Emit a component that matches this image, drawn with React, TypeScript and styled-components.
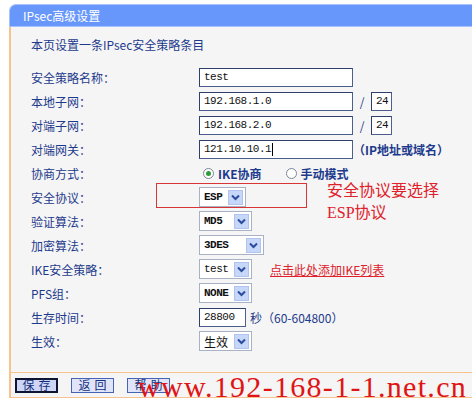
import React from 'react';
import styled, { createGlobalStyle } from 'styled-components';

const GlobalStyle = createGlobalStyle`
  body {
    margin: 0;
    background: #ffffff;
    font-family: "Noto Sans CJK SC", "Liberation Sans", sans-serif;
    font-size: 12px;
  }
`;

const Page = styled.div`
  padding: 4px 0 0 9px;
  width: 463px;
`;

const TitleBar = styled.div`
  height: 23px;
  box-sizing: border-box;
  display: flex;
  align-items: center;
  padding-left: 13px;
  background: #6797fa;
  border: 1px solid #a8c3fb;
  border-right: none;
  border-top-left-radius: 7px;
  color: #ffffff;
  font-size: 12px;
`;

const Body = styled.div`
  position: relative;
  background: #f5f5f5;
  border-left: 2px solid #f7c28e;
  padding: 6px 0 19px 20px;
  color: #1d3a8c;
`;

const Intro = styled.div`
  line-height: 24px;
  margin-bottom: 8px;
`;

const Form = styled.div`
  display: grid;
  grid-template-columns: 168px 1fr;
  grid-auto-rows: 24px;
  align-items: center;
`;

const Label = styled.div`
  color: #1d3a8c;
`;

const Field = styled.div<{ $gap?: number }>`
  display: flex;
  align-items: center;
  gap: ${(p) => p.$gap ?? 0}px;
`;

const TextInput = styled.div<{ $w: number }>`
  width: ${(p) => p.$w}px;
  height: 19px;
  box-sizing: border-box;
  display: flex;
  align-items: center;
  padding-left: 4px;
  background: #ffffff;
  border: 1px solid #4d5f8f;
  border-top-color: #2f3f6c;
  border-left-color: #2f3f6c;
  font-family: "Liberation Mono", monospace;
  font-size: 11px;
  letter-spacing: -0.5px;
  color: #111;
`;

const Caret = styled.span`
  display: inline-block;
  width: 1px;
  height: 13px;
  margin-left: 1px;
  background: #000;
`;

const Slash = styled.span`
  width: 18px;
  text-align: center;
  color: #1d3a8c;
  font-size: 12px;
`;

const Hint = styled.span<{ $bold?: boolean }>`
  color: #1d3a8c;
  font-weight: ${(p) => (p.$bold ? 700 : 400)};
`;

const SelectBox = styled.div<{ $w: number }>`
  width: ${(p) => p.$w}px;
  height: 20px;
  box-sizing: border-box;
  display: flex;
  align-items: center;
  justify-content: space-between;
  padding: 0 2px 0 4px;
  background: #ffffff;
  border: 1px solid #a9b2c4;
`;

const SelectText = styled.span<{ $kind: 'bold' | 'mono' | 'cjk' }>`
  font-family: ${(p) =>
    p.$kind === 'cjk' ? '"Noto Sans CJK SC", sans-serif' : '"Liberation Mono", monospace'};
  font-weight: ${(p) => (p.$kind === 'bold' ? 700 : 400)};
  font-size: ${(p) => (p.$kind === 'cjk' ? 12 : 11)}px;
  letter-spacing: ${(p) => (p.$kind === 'cjk' ? 0 : -0.5)}px;
  color: #111;
`;

const ArrowButton = styled.span`
  width: 15px;
  height: 15px;
  box-sizing: border-box;
  display: flex;
  align-items: center;
  justify-content: center;
  background: #c7d7f9;
  border: 1px solid #b1c3ec;
`;

const Radio = styled.span<{ $on?: boolean }>`
  width: 11px;
  height: 11px;
  box-sizing: border-box;
  border-radius: 50%;
  border: 1px solid #7a8699;
  background: #ffffff;
  display: flex;
  align-items: center;
  justify-content: center;
  margin: 0 4px 0 4px;
  &::after {
    content: '';
    display: ${(p) => (p.$on ? 'block' : 'none')};
    width: 5px;
    height: 5px;
    border-radius: 50%;
    background: #2f9a3a;
  }
`;

const RadioLabel = styled.span`
  color: #1d3a8c;
  font-weight: 700;
  margin-right: 20px;
`;

const Link = styled.span`
  color: #e0202a;
  text-decoration: underline;
  margin-left: 18px;
`;

const MarkBox = styled.div`
  position: absolute;
  left: 145px;
  top: 156px;
  width: 151px;
  height: 25px;
  box-sizing: border-box;
  border: 1.5px solid #d83636;
`;

const MarkText = styled.div`
  position: absolute;
  left: 316px;
  top: 153px;
  font-size: 16px;
  line-height: 22px;
  color: #e0202a;
  font-family: "Liberation Serif", "Noto Sans CJK SC", serif;
`;

const Footer = styled.div`
  position: relative;
  height: 26px;
  box-sizing: border-box;
  display: flex;
  align-items: center;
  gap: 13px;
  padding-left: 4px;
  background: #f5f5f5;
  border-top: 1px solid #f7c28e;
  border-bottom: 1px solid #f7c28e;
  border-left: 2px solid #f7c28e;
`;

const Button = styled.button<{ $focused?: boolean }>`
  width: 43px;
  height: 15px;
  box-sizing: border-box;
  padding: 0;
  display: flex;
  align-items: center;
  justify-content: center;
  background: ${(p) => (p.$focused ? '#cfd6f5' : '#dfe4f8')};
  border: ${(p) => (p.$focused ? '2px solid #0e1530' : '1px solid #4663b4')};
  color: #14307c;
  font-family: "Noto Sans CJK SC", sans-serif;
  font-size: 12px;
  letter-spacing: 4px;
  text-indent: 4px;
  line-height: 1;
`;

const Watermark = styled.div`
  position: absolute;
  left: 127px;
  top: -1px;
  font-family: "Liberation Serif", serif;
  font-size: 30px;
  line-height: 30px;
  letter-spacing: 1.3px;
  color: #e01414;
  white-space: nowrap;
  pointer-events: none;
`;

const Chevron = () => (
  <svg width="9" height="7" viewBox="0 0 9 7">
    <path d="M1 1.5L4.5 5L8 1.5" fill="none" stroke="#2c4a9e" strokeWidth="2" />
  </svg>
);

const Select = ({
  w,
  value,
  kind = 'bold',
}: {
  w: number;
  value: string;
  kind?: 'bold' | 'mono' | 'cjk';
}) => (
  <SelectBox $w={w}>
    <SelectText $kind={kind}>{value}</SelectText>
    <ArrowButton>
      <Chevron />
    </ArrowButton>
  </SelectBox>
);

export default function App() {
  return (
    <>
      <GlobalStyle />
      <Page>
        <TitleBar>IPsec高级设置</TitleBar>
        <Body>
          <Intro>本页设置一条IPsec安全策略条目</Intro>
          <Form>
            <Label>安全策略名称：</Label>
            <Field>
              <TextInput $w={154}>test</TextInput>
            </Field>

            <Label>本地子网：</Label>
            <Field>
              <TextInput $w={154}>192.168.1.0</TextInput>
              <Slash>/</Slash>
              <TextInput $w={21}>24</TextInput>
            </Field>

            <Label>对端子网：</Label>
            <Field>
              <TextInput $w={154}>192.168.2.0</TextInput>
              <Slash>/</Slash>
              <TextInput $w={21}>24</TextInput>
            </Field>

            <Label>对端网关：</Label>
            <Field>
              <TextInput $w={154}>
                121.10.10.1
                <Caret />
              </TextInput>
              <Hint $bold>（IP地址或域名）</Hint>
            </Field>

            <Label>协商方式：</Label>
            <Field>
              <Radio $on />
              <RadioLabel>IKE协商</RadioLabel>
              <Radio />
              <RadioLabel>手动模式</RadioLabel>
            </Field>

            <Label>安全协议：</Label>
            <Field>
              <Select w={47} value="ESP" />
            </Field>

            <Label>验证算法：</Label>
            <Field>
              <Select w={53} value="MD5" />
            </Field>

            <Label>加密算法：</Label>
            <Field>
              <Select w={65} value="3DES" />
            </Field>

            <Label>IKE安全策略：</Label>
            <Field>
              <Select w={53} value="test" kind="mono" />
              <Link>点击此处添加IKE列表</Link>
            </Field>

            <Label>PFS组：</Label>
            <Field>
              <Select w={53} value="NONE" />
            </Field>

            <Label>生存时间：</Label>
            <Field $gap={4}>
              <TextInput $w={47}>28800</TextInput>
              <Hint>秒（60-604800）</Hint>
            </Field>

            <Label>生效：</Label>
            <Field>
              <Select w={53} value="生效" kind="cjk" />
            </Field>
          </Form>
          <MarkBox />
          <MarkText>
            安全协议要选择
            <br />
            ESP协议
          </MarkText>
        </Body>
        <Footer>
          <Button $focused>保存</Button>
          <Button>返回</Button>
          <Button>帮助</Button>
          <Watermark>www.192-168-1-1.net.cn</Watermark>
        </Footer>
      </Page>
    </>
  );
}
